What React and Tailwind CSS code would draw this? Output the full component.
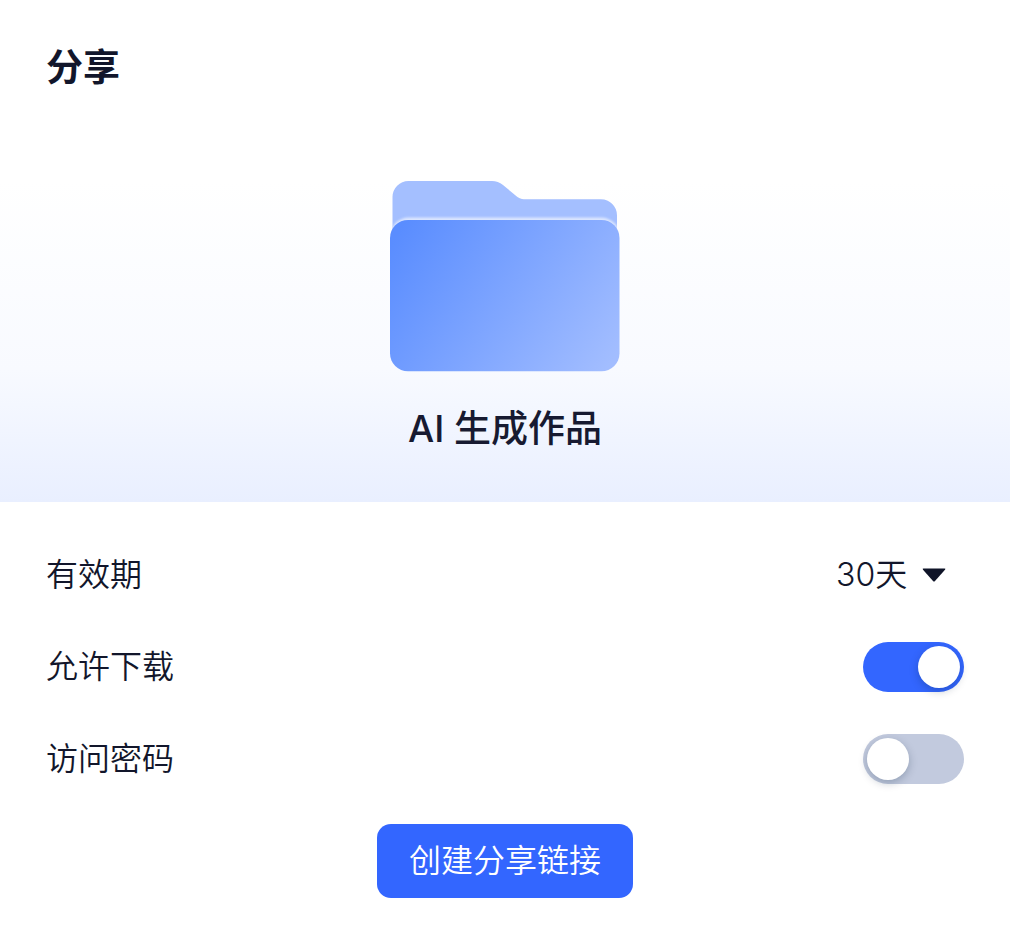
import { useState } from "react";

function FolderIcon() {
  return (
    <svg width="230" height="191" viewBox="0 0 230 191" aria-hidden="true">
      <defs>
        <linearGradient id="front" x1="8" y1="52" x2="216" y2="188" gradientUnits="userSpaceOnUse">
          <stop offset="0" stopColor="#5a8dff" />
          <stop offset="1" stopColor="#a2bdff" />
        </linearGradient>
        <filter id="glow" x="-5%" y="-5%" width="110%" height="110%">
          <feGaussianBlur stdDeviation="0.8" />
        </filter>
        <clipPath id="backShape">
          <path d="M2.500 60V16A16 16 0 0 1 18.500 0H102Q108 0 113 4L125 14Q130 18.300 134 18.300H211A16 16 0 0 1 227 34.300V60Z" />
        </clipPath>
      </defs>
      <g clipPath="url(#backShape)">
        <rect width="230" height="60" fill="#a4bfff" />
        <rect x="0" y="36.500" width="230" height="154" rx="19" fill="#dbe6ff" filter="url(#glow)" />
      </g>
      <rect x="0" y="39" width="229.500" height="151.300" rx="18" fill="url(#front)" />
    </svg>
  );
}

function Toggle({ id, checked, onChange }) {
  return (
    <input
      id={id}
      type="checkbox"
      role="switch"
      checked={checked}
      onChange={(e) => onChange(e.target.checked)}
      className="flex h-[50px] w-[101px] cursor-pointer appearance-none items-center rounded-full bg-[#c2cade] px-1 before:size-[42px] before:rounded-full before:bg-white before:shadow-[0_3px_8px_rgba(0,30,60,0.25)] before:content-[''] checked:justify-end checked:bg-[#3366ff]"
    />
  );
}

function Row({ id, label, children }) {
  return (
    <div className="flex h-[92px] items-center justify-between">
      <label htmlFor={id}>{label}</label>
      {children}
    </div>
  );
}

export default function App() {
  const [download, setDownload] = useState(true);
  const [password, setPassword] = useState(false);
  const [period, setPeriod] = useState("30");

  return (
    <main className="min-h-screen bg-white font-['Inter','Noto_Sans_CJK_SC',sans-serif] text-[32px] leading-10 font-[350] text-[#12162b]">
      <header className="px-[46px] pt-11">
        <h1 className="text-[37px] leading-12 font-bold">分享</h1>
      </header>

      <section className="mt-8 flex flex-col items-center bg-linear-to-b from-white from-15% via-[#f8faff] via-65% to-[#e9efff] pt-[57px] pb-12">
        <FolderIcon />
        <h2 className="mt-8 text-[37px] leading-[50px] font-medium text-[#171a31]">AI 生成作品</h2>
      </section>

      <form className="px-[46px] pt-[27px]" onSubmit={(e) => e.preventDefault()}>
        <Row id="period" label="有效期">
          <div className="relative mr-[18px]">
            <select
              id="period"
              value={period}
              onChange={(e) => setPeriod(e.target.value)}
              className="cursor-pointer appearance-none bg-transparent pr-[38px]"
            >
              <option value="30">30天</option>
              <option value="7">7天</option>
            </select>
            <svg
              className="pointer-events-none absolute top-1/2 right-0 -translate-y-1/2"
              width="24"
              height="14"
              viewBox="0 0 24 14"
              aria-hidden="true"
            >
              <path d="M1.500 0.500H22.500Q24 0.500 23 1.700L13 13Q12 14 11 13L1 1.700Q0 0.500 1.500 0.500Z" fill="#0f1428" />
            </svg>
          </div>
        </Row>
        <Row id="download" label="允许下载">
          <Toggle id="download" checked={download} onChange={setDownload} />
        </Row>
        <Row id="password" label="访问密码">
          <Toggle id="password" checked={password} onChange={setPassword} />
        </Row>
        <div className="flex justify-center pt-[19px] pb-11">
          <button type="submit" className="h-[74px] cursor-pointer rounded-[14px] bg-[#3366ff] px-8 text-white">
            创建分享链接
          </button>
        </div>
      </form>
    </main>
  );
}
